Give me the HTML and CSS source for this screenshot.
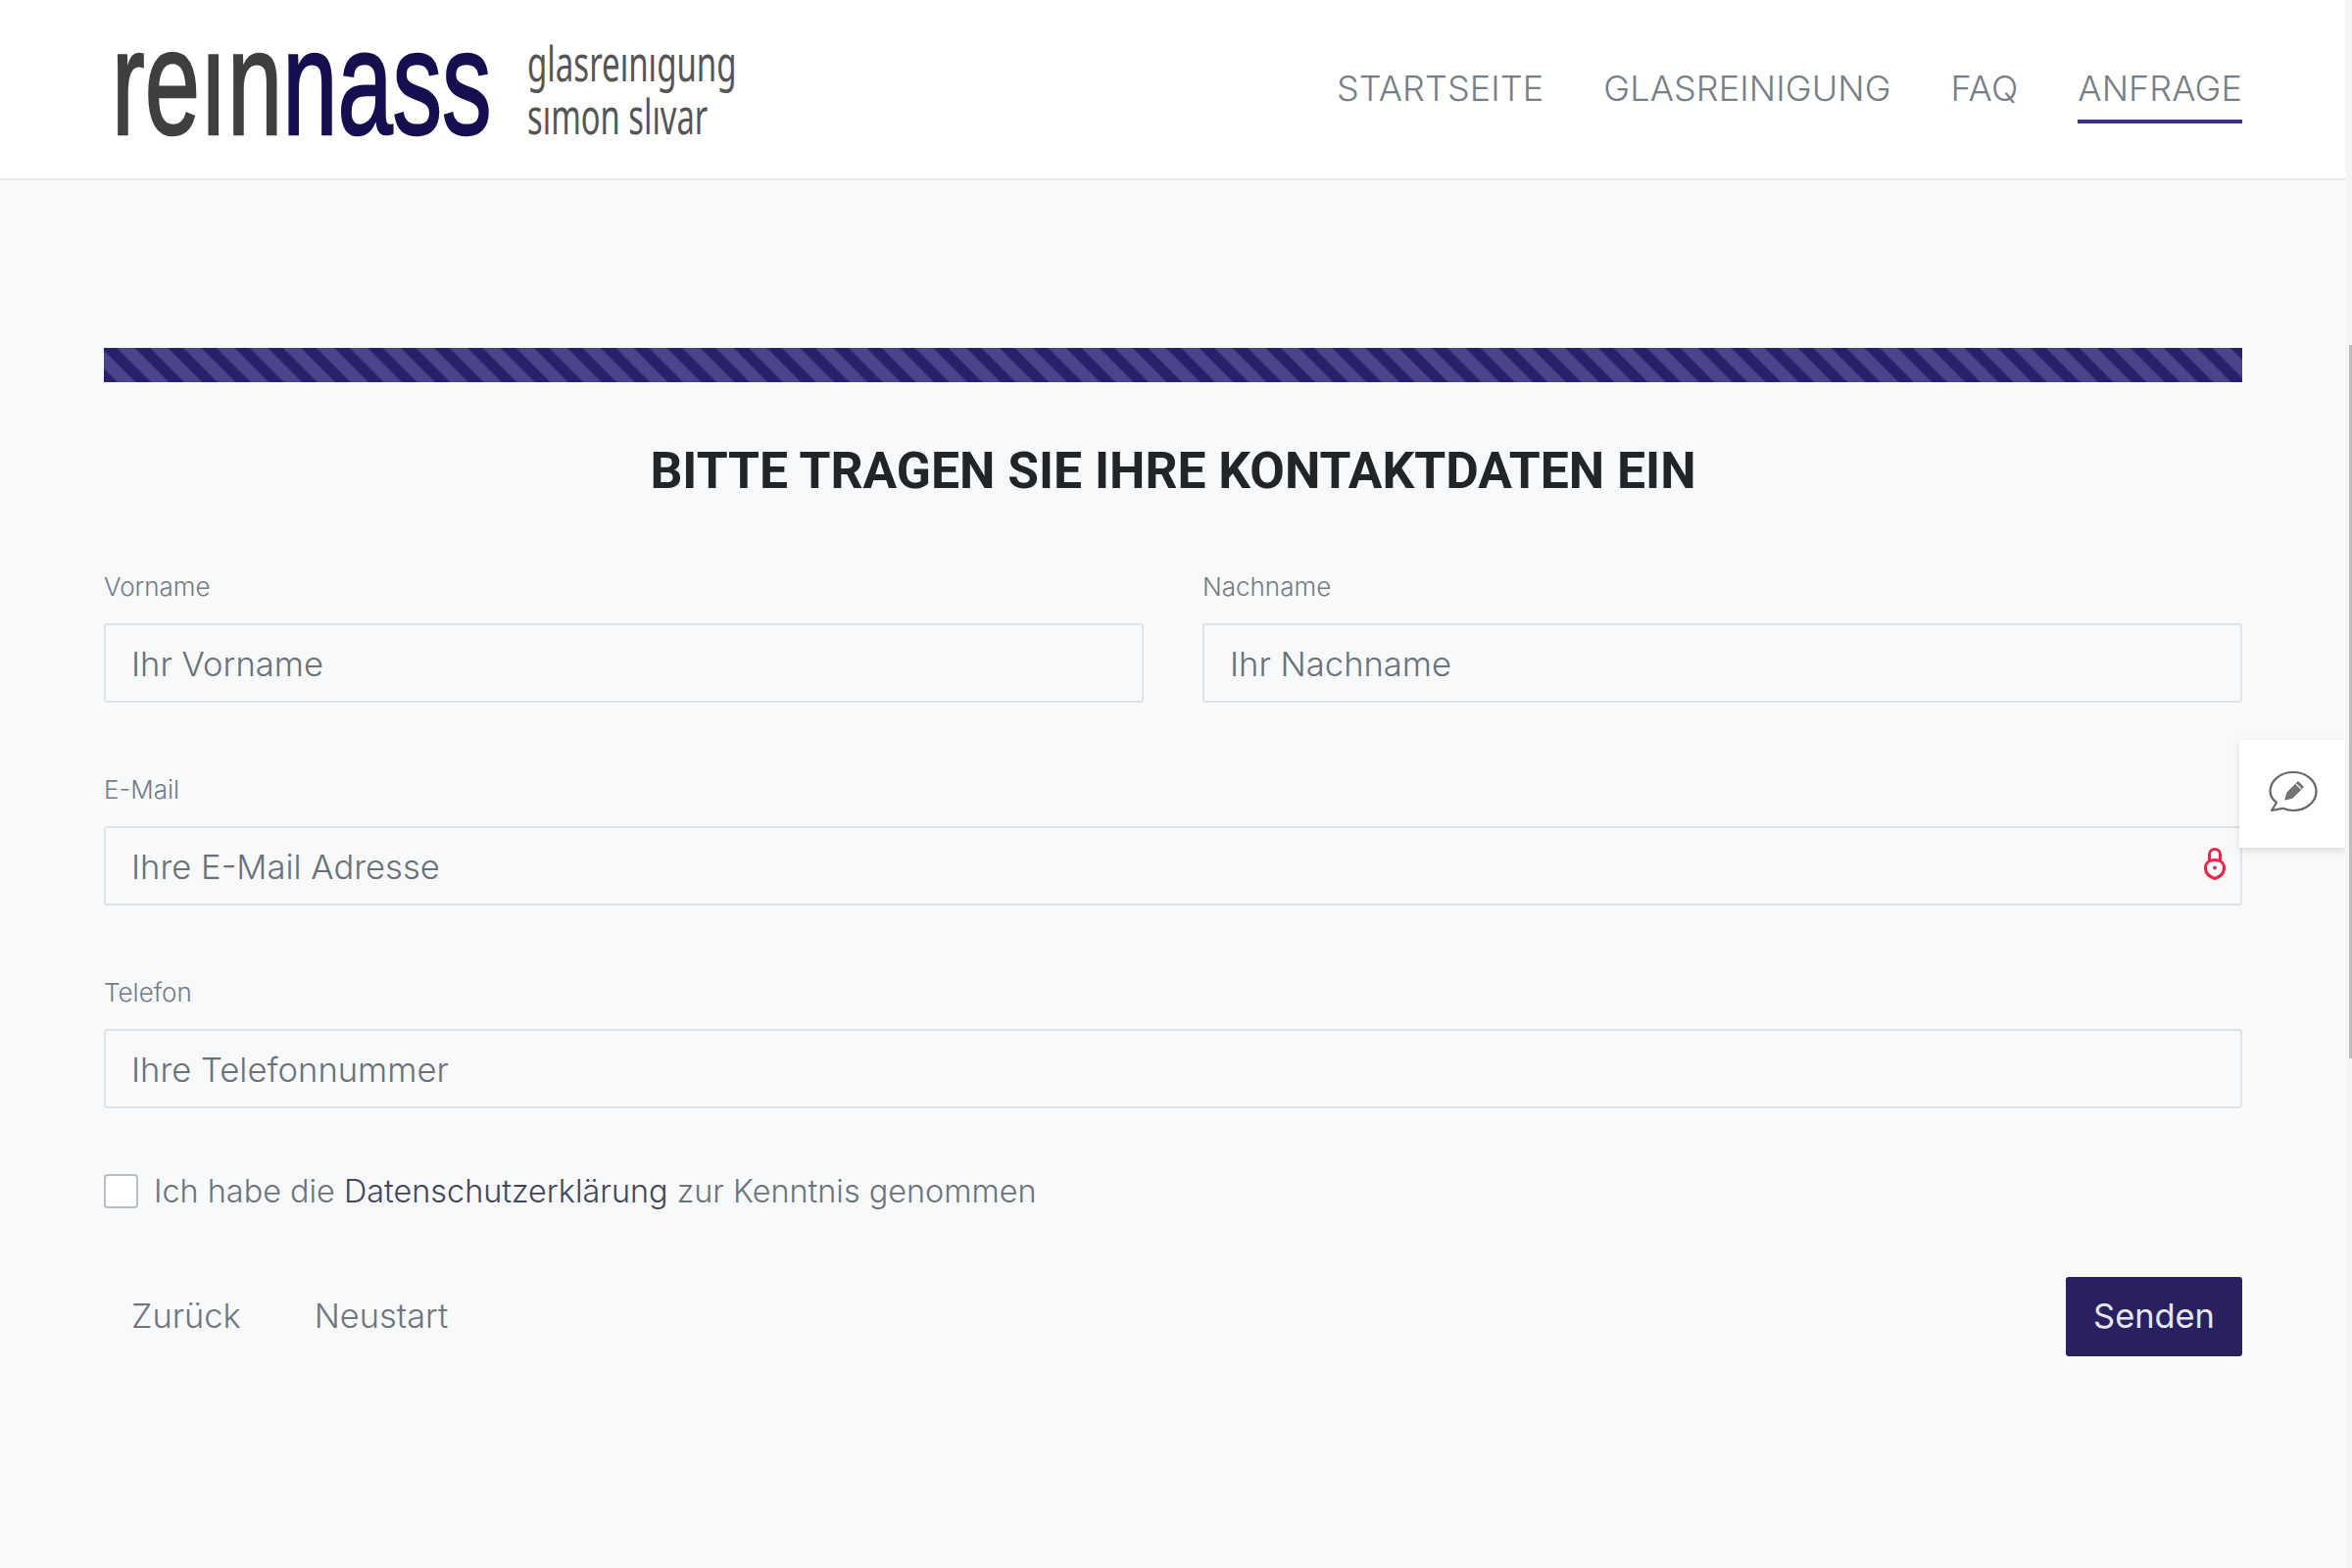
FILE: index.html
```html
<!DOCTYPE html>
<html lang="de">
<head>
    <meta charset="UTF-8">
    <meta name="viewport" content="width=device-width, initial-scale=1.0">
    <title>Anfrage - reinnass</title>
    <link rel="stylesheet" href="styles.css">
</head>
<body>
    <header class="topbar">
        <a class="logo" href="#" aria-label="reinnass glasreinigung simon slivar">
            <svg class="logo-art" width="640" height="110" viewBox="0 0 640 110">
                <text class="logo-name" transform="translate(-5 93) scale(.665 1)"><tspan class="logo-grey">reın</tspan><tspan class="logo-navy">nass</tspan></text>
                <text class="logo-sub" transform="translate(419 39) scale(.66 1)">glasreınıgung</text>
                <text class="logo-sub" transform="translate(419 93) scale(.655 1)">sımon slıvar</text>
            </svg>
        </a>
        <nav class="nav">
            <a href="#">Startseite</a>
            <a href="#">Glasreinigung</a>
            <a href="#">FAQ</a>
            <a href="#" class="active">Anfrage</a>
        </nav>
    </header>

    <main class="content">
        <div class="progress"></div>
        <h1>Bitte tragen Sie Ihre Kontaktdaten ein</h1>

        <form class="form">
            <div class="row two">
                <div class="field">
                    <label for="vorname">Vorname</label>
                    <input id="vorname" type="text" placeholder="Ihr Vorname">
                </div>
                <div class="field">
                    <label for="nachname">Nachname</label>
                    <input id="nachname" type="text" placeholder="Ihr Nachname">
                </div>
            </div>
            <div class="row">
                <div class="field">
                    <label for="email">E-Mail</label>
                    <div class="input-wrap">
                        <input id="email" type="text" placeholder="Ihre E-Mail Adresse">
                        <svg class="lock" width="22" height="33" viewBox="0 0 22 33" fill="none" stroke="#e8294c">
                            <path d="M5.500 13V7a5.500 5.500 0 0 1 11 0v6" stroke-width="3"/>
                            <path d="M11 31.500C5 29.500 1.500 25.500 1.500 20.500c0-5 4-8 9.500-8s9.500 3 9.500 8c0 5-3.500 9-9.500 11z" stroke-width="3.200"/>
                            <circle cx="11" cy="20.500" r="2" fill="#c9405f" stroke="none"/>
                        </svg>
                    </div>
                </div>
            </div>
            <div class="row">
                <div class="field">
                    <label for="telefon">Telefon</label>
                    <input id="telefon" type="text" placeholder="Ihre Telefonnummer">
                </div>
            </div>
            <label class="consent">
                <input type="checkbox">
                <span>Ich habe die <a href="#">Datenschutzerklärung</a> zur Kenntnis genommen</span>
            </label>
            <div class="actions">
                <button type="button" class="link-btn">Zurück</button>
                <button type="button" class="link-btn">Neustart</button>
                <button type="submit" class="send">Senden</button>
            </div>
        </form>
    </main>

    <button class="feedback" aria-label="Feedback">
        <svg width="50" height="43" viewBox="0 0 50 43" fill="none" stroke="#666">
            <path d="M3 41l5-8C3.500 29.500 1.500 26 1.500 21.500 1.500 10.500 12 2 25 2s23.500 8.500 23.500 19.500S38 41 25 41c-4 0-7.500-.8-10.500-2.200z" stroke-width="2.200" stroke-linejoin="round"/>
            <path d="M17 30l2-7 11-11 5 5-11 11z" fill="#777" stroke-width="1.200" stroke-linejoin="round"/>
            <path d="M28 14l5 5" stroke="#fff" stroke-width="1.200"/>
        </svg>
    </button>
    <div class="scroll-track"></div>
    <div class="scroll-thumb"></div>
</body>
</html>
```

FILE: styles.css
```css
* {
    box-sizing: border-box;
}

body {
    margin: 0;
    min-height: 100vh;
    background: #f8f9fb;
    font-family: "Inter", "Liberation Sans", sans-serif;
    color: #6c757d;
}

.topbar {
    display: flex;
    align-items: center;
    justify-content: space-between;
    height: 184px;
    padding: 0 112px 0 119px;
    background: #fff;
    border-bottom: 2px solid #e6e8ec;
}

.logo {
    display: block;
    height: 110px;
    margin-top: 16px;
}

.logo-art {
    display: block;
    overflow: visible;
}

.logo-name {
    font-family: "Liberation Sans", sans-serif;
    font-size: 152px;
    stroke-width: 2.500px;
}

.logo-grey {
    fill: #3f3f3f;
    stroke: #3f3f3f;
}

.logo-navy {
    fill: #14104f;
    stroke: #14104f;
}

.logo-sub {
    font-family: "Noto Sans", sans-serif;
    font-size: 50px;
    fill: #555;
}

.nav {
    display: flex;
    gap: 61px;
    margin-top: 12px;
}

.nav a {
    padding-bottom: 10px;
    border-bottom: 4px solid transparent;
    color: #777e86;
    font-size: 36px;
    font-weight: 300;
    line-height: 44px;
    letter-spacing: 0.1px;
    text-decoration: none;
    text-transform: uppercase;
}

.nav a.active {
    border-bottom-color: #3a3478;
}

.content {
    padding: 171px 112px 0 106px;
}

.progress {
    height: 35px;
    background: repeating-linear-gradient(45deg, #28206a 0, #28206a 9px, #4a4488 11px, #4a4488 22px, #28206a 24px);
}

h1 {
    margin: 61px 0 73px;
    color: #212529;
    font-family: "Roboto", sans-serif;
    font-size: 51.600px;
    font-weight: 700;
    line-height: 60px;
    text-align: center;
    text-transform: uppercase;
}

.row {
    margin-bottom: 74px;
}

.row.two {
    display: grid;
    grid-template-columns: 1fr 1fr;
    gap: 60px;
}

.field label {
    display: block;
    margin-bottom: 22px;
    color: #747b83;
    font-size: 26px;
    font-weight: 300;
    line-height: 30px;
}

.field input {
    display: block;
    width: 100%;
    height: 81px;
    padding: 0 26px;
    background: #f8f9fb;
    border: 2px solid #dfe2e7;
    border-radius: 3px;
    color: #495057;
    font-family: inherit;
    font-size: 34.600px;
    font-weight: 300;
}

.field input::placeholder {
    color: #6a7178;
    opacity: 1;
}

.input-wrap {
    position: relative;
}

.lock {
    position: absolute;
    top: 22px;
    right: 17px;
}

.consent {
    display: flex;
    align-items: center;
    gap: 16px;
    margin-top: -10px;
    color: #6c737b;
    font-size: 32.400px;
    font-weight: 300;
    line-height: 41px;
}

.consent input {
    appearance: none;
    width: 35px;
    height: 35px;
    margin: 0;
    background: #fff;
    border: 2px solid #b9bec6;
    border-radius: 4px;
}

.consent a {
    color: #44445a;
    text-decoration: none;
}

.actions {
    display: flex;
    align-items: center;
    gap: 19px;
    margin-top: 67px;
}

.actions button {
    height: 81px;
    padding-bottom: 3px;
    font-family: inherit;
    font-size: 34.400px;
    cursor: pointer;
}

.link-btn {
    padding: 0 28px;
    background: none;
    border: 0;
    color: #6f767e;
    font-weight: 300;
}

.send {
    width: 180px;
    margin-left: auto;
    background: #29215f;
    border: 0;
    border-radius: 3px;
    color: #e6e6f2;
    font-weight: 400;
}

/* schwebt rechts ueber dem formular */
.feedback {
    position: fixed;
    top: 755px;
    left: 2285px;
    width: 109px;
    height: 110px;
    padding: 0;
    background: #fff;
    border: 0;
    box-shadow: 0 3px 8px rgba(0, 0, 0, 0.12);
}

.feedback svg {
    display: block;
    margin: -6px auto 0;
}

.scroll-track {
    position: fixed;
    top: 0;
    right: 0;
    bottom: 0;
    width: 7px;
    background: #f4f5f7;
}

.scroll-thumb {
    position: fixed;
    top: 352px;
    right: 0;
    width: 3px;
    height: 728px;
    background: #bcbcbc;
}
```
